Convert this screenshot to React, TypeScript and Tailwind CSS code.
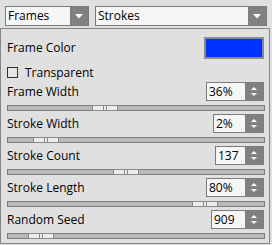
import React from "react";

const font = { fontFamily: '"Open Sans", "Liberation Sans", Arial, sans-serif' };

function Combo({ label, w }: { label: string; w: string }) {
  return (
    <div className={`flex h-[20px] ${w} border border-[#7a7a7a] bg-[#f6f6f6]`}>
      <div className="flex flex-1 items-center pl-[2px] text-[12px] leading-none text-black">{label}</div>
      <div className="flex w-[18px] items-center justify-center bg-[#808080]">
        <svg width="8" height="5" viewBox="0 0 8 5">
          <path d="M0 0 H8 L4 4.5 Z" fill="#ffffff" />
        </svg>
      </div>
    </div>
  );
}

function Spin({ value, w }: { value: string; w: string }) {
  return (
    <div className={`flex h-[19px] ${w} border border-[#7a7a7a] bg-[#f6f6f6]`}>
      <div className="flex flex-1 items-center pl-[2px] text-[12px] leading-none text-black">{value}</div>
      <div className="flex w-[18px] flex-col items-center justify-center gap-[3px] bg-[#808080]">
        <svg width="6" height="3" viewBox="0 0 6 3">
          <path d="M0 3 H6 L3 0 Z" fill="#ffffff" />
        </svg>
        <svg width="6" height="3" viewBox="0 0 6 3">
          <path d="M0 0 H6 L3 3 Z" fill="#ffffff" />
        </svg>
      </div>
    </div>
  );
}

function Slider({ left }: { left: string }) {
  return (
    <div className="relative mt-[4px] h-[6px] w-[258px] border border-[#7e7e7e] bg-[#b8b8b8]">
      <div className={`absolute top-[-1px] ${left} flex h-[6px] w-[26px] items-center justify-center gap-[2px] border border-[#8a8a8a] bg-[#ececec]`}>
        <div className="h-full w-[1px] bg-[#8a8a8a]" />
        <div className="h-full w-[1px] bg-[#8a8a8a]" />
      </div>
    </div>
  );
}

function Row({ label, value, w, left }: { label: string; value: string; w: string; left: string }) {
  return (
    <div className="flex flex-col">
      <div className="flex h-[19px] items-center justify-between">
        <span className="text-[12px] leading-none text-black">{label}</span>
        <Spin value={value} w={w} />
      </div>
      <Slider left={left} />
      <div className="h-[3px]" />
    </div>
  );
}

export default function App() {
  return (
    <div className="h-[245px] w-[272px] overflow-hidden bg-[#e0e0e0]" style={font}>
      <div className="flex h-[28px] items-start gap-[6px] pl-[5px] pt-[6px]">
        <Combo label="Frames" w="w-[84px]" />
        <Combo label="Strokes" w="w-[172px]" />
      </div>
      <div className="h-[216px] w-[270px] border border-[#858585] pl-[6px] pr-[5px]">
        <div className="mt-[8px] flex h-[22px] items-center justify-between">
          <span className="text-[12px] leading-none text-black">Frame Color</span>
          <div className="h-[22px] w-[60px] border-2 border-[#8a8a8a] bg-[#0033ff]" />
        </div>
        <div className="mt-[8px] flex h-[11px] items-center gap-[7px]">
          <div className="h-[11px] w-[11px] border border-[#333333] bg-[#e6e6e6]" />
          <span className="text-[12px] leading-none text-black">Transparent</span>
        </div>
        <div className="mt-[4px] flex flex-col">
          <Row label="Frame Width" value="36%" w="w-[58px]" left="left-[84px]" />
          <Row label="Stroke Width" value="2%" w="w-[51px]" left="left-[25px]" />
          <Row label="Stroke Count" value="137" w="w-[49px]" left="left-[105px]" />
          <Row label="Stroke Length" value="80%" w="w-[58px]" left="left-[184px]" />
          <Row label="Random Seed" value="909" w="w-[53px]" left="left-[20px]" />
        </div>
      </div>
    </div>
  );
}
